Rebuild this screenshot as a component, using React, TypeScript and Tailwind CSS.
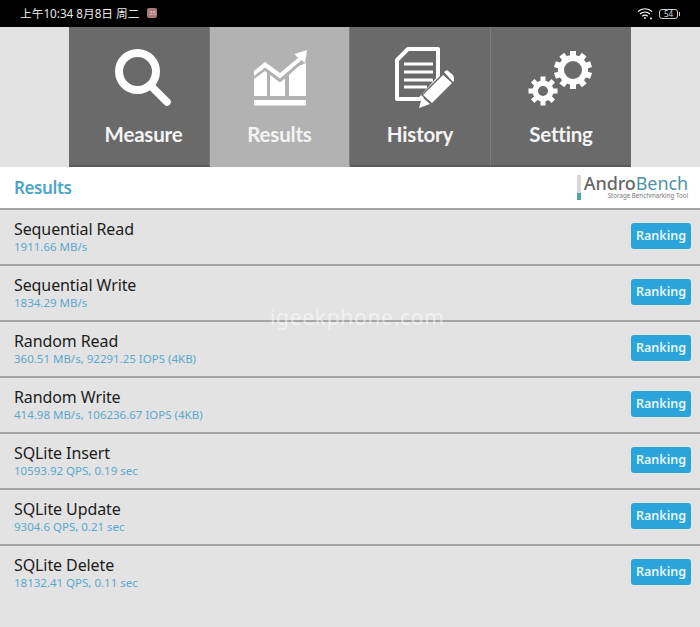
import React from 'react';

const font = { fontFamily: '"Noto Sans", "Noto Sans CJK SC", sans-serif' };

const results = [
    { name: 'Sequential Read', value: '1911.66 MB/s' },
    { name: 'Sequential Write', value: '1834.29 MB/s' },
    { name: 'Random Read', value: '360.51 MB/s, 92291.25 IOPS (4KB)' },
    { name: 'Random Write', value: '414.98 MB/s, 106236.67 IOPS (4KB)' },
    { name: 'SQLite Insert', value: '10593.92 QPS, 0.19 sec' },
    { name: 'SQLite Update', value: '9304.6 QPS, 0.21 sec' },
    { name: 'SQLite Delete', value: '18132.41 QPS, 0.11 sec' },
];

const MeasureIcon = () => (
    <svg width="60" height="62" viewBox="0 0 60 62" fill="none" stroke="white">
        <circle cx="23.5" cy="24.5" r="18.5" strokeWidth="8" />
        <path d="M38 40 L53 55" strokeWidth="7.5" strokeLinecap="round" />
    </svg>
);

const ResultsIcon = () => (
    <svg width="56" height="60" viewBox="0 0 56 60" fill="white">
        <path d="M2 23 L13 14 L28 25 L46 10 L42.5 6 L55 2 L53 15 L49.5 12 L28 30.5 L13 19.5 L2 28 Z" />
        <path d="M2 31 L13 23 L15 24.5 L15 48 L2 48 Z" />
        <path d="M18 27 L28 34.5 L33 30.5 L33 48 L18 48 Z" />
        <path d="M37 27 L47 18 L54 15 L54 48 L37 48 Z" />
        <rect x="2" y="52" width="52" height="5.5" />
    </svg>
);

const HistoryIcon = () => (
    <svg width="60" height="64" viewBox="0 0 60 64" fill="none">
        <path d="M14 3 H44 V33 L26 53 H3 V14 Z" stroke="white" strokeWidth="4" strokeLinejoin="round" />
        <path d="M10 18 H39 M10 26 H39 M10 34 H39 M10 41 H33" stroke="white" strokeWidth="3" />
        <path d="M28 49 L49 28 L59 37 L38 58 Z" fill="white" stroke="#6a6a6a" strokeWidth="1.5" />
        <path d="M50 26 L53 24 L59 29 L61 34 L59 36 Z" fill="white" />
        <path d="M28 51 L36 58 L25 62 Z" fill="white" />
    </svg>
);

const Gear = ({ cx, cy, r, hole, teeth, tw }: { cx: number; cy: number; r: number; hole: number; teeth: number; tw: number }) => (
    <g>
        {Array.from({ length: teeth }).map((_, i) => (
            <rect
                key={i}
                x={cx - tw / 2}
                y={cy - r - 4}
                width={tw}
                height={8}
                fill="white"
                transform={`rotate(${(360 / teeth) * i} ${cx} ${cy})`}
            />
        ))}
        <circle cx={cx} cy={cy} r={r} fill="white" />
        <circle cx={cx} cy={cy} r={hole} fill="#6a6a6a" />
    </g>
);

const SettingIcon = () => (
    <svg width="66" height="58" viewBox="0 0 66 58">
        <Gear cx={45} cy={21} r={15} hole={9} teeth={10} tw={6} />
        <Gear cx={15} cy={42} r={10.5} hole={5} teeth={8} tw={5} />
    </svg>
);

const tabs = [
    { label: 'Measure', icon: <MeasureIcon />, active: false, box: 'w-[141px] pl-[9px]' },
    { label: 'Results', icon: <ResultsIcon />, active: true, box: 'w-[140px]' },
    { label: 'History', icon: <HistoryIcon />, active: false, box: 'w-[141px]' },
    { label: 'Setting', icon: <SettingIcon />, active: false, box: 'w-[140px]' },
];

const WifiIcon = () => (
    <svg width="16" height="13" viewBox="0 0 16 13" fill="none" stroke="white" strokeWidth="1.2">
        <path d="M1 4.5 C5 0.8 11 0.8 15 4.5" />
        <path d="M3 7 C6 4.3 10 4.3 13 7" />
        <path d="M5.2 9.3 C7 7.8 9 7.8 10.8 9.3" />
        <circle cx="8" cy="11" r="0.9" fill="white" stroke="none" />
        <circle cx="14" cy="11.5" r="1" fill="white" stroke="none" />
    </svg>
);

const Battery = () => (
    <div className="flex items-center">
        <div className="w-[19px] h-[10px] border border-[#cccccc] rounded-[3px] flex items-center justify-center text-[8px] leading-none text-[#dddddd]">
            54
        </div>
        <div className="w-[1px] h-[4px] bg-[#cccccc] ml-[1px]" />
    </div>
);

export default function App() {
    return (
        <div className="relative w-[700px] h-[627px] bg-[#e3e3e3] overflow-hidden" style={font}>
            {/* status bar */}
            <div className="h-[27px] bg-black flex items-center justify-between pl-[20px] pr-[20px]">
                <div className="flex items-center gap-[8px] text-[11.7px] text-[#e8e8e8]">
                    <span>上午10:34 8月8日 周二</span>
                    <div className="w-[10px] h-[10px] rounded-[2px] bg-[#a87878] flex items-center justify-center text-[6px] leading-none text-[#e8d0d0]">
                        35
                    </div>
                </div>
                <div className="flex items-center gap-[6px]">
                    <WifiIcon />
                    <Battery />
                </div>
            </div>

            {/* tabs */}
            <div className="flex h-[140px] mx-[69px]">
                {tabs.map(tab => (
                    <div
                        key={tab.label}
                        className={`shrink-0 flex flex-col items-center border-r border-[#7c7c7c] last:border-r-0 border-b-2 ${tab.box} ${tab.active ? 'bg-[#b2b2b2] border-b-[#b2b2b2]' : 'bg-[#6a6a6a] border-b-[#5c5c5c]'}`}
                    >
                        <div className={`h-[84px] pt-[18px] flex items-center justify-center ${tab.label === 'History' ? 'pl-[8px]' : ''}`}>{tab.icon}</div>
                        <div className="text-[20.5px] font-bold leading-[28px] mt-[9px] text-[#f4f4f4] tracking-[-0.2px]" style={{ fontFamily: 'Lato, sans-serif' }}>
                            {tab.label}
                        </div>
                    </div>
                ))}
            </div>

            {/* header */}
            <div className="h-[41px] bg-white flex items-center justify-between pl-[14px] pr-[12px]">
                <div className="text-[17px] font-semibold text-[#4ba6c8] tracking-[-0.4px] mt-[1px]">Results</div>
                <div className="flex items-stretch h-[25px]">
                    <div className="w-[4px] mr-[3px] flex flex-col justify-end bg-[#d8d8d8]">
                        <div className="h-[7px] bg-[#4f9fb5]" />
                    </div>
                    <div className="flex flex-col items-end">
                        <div className="h-[16px] text-[18px] leading-[16px] tracking-[-0.1px]">
                            <span className="inline-block leading-[16px] text-[#666666] font-medium">Andro</span>
                            <span className="inline-block leading-[16px] text-[#4f93a5]">Bench</span>
                        </div>
                        <div className="text-[6.2px] leading-[8px] text-[#777777] mt-[1px]">Storage Benchmarking Tool</div>
                    </div>
                </div>
            </div>

            {/* rows */}
            <div>
                {results.map(r => (
                    <div key={r.name} className="h-[56px] border-t-2 border-[#a6a6a6] flex items-center justify-between pl-[14px] pr-[9px]">
                        <div className="-mt-[2px]">
                            <div className="text-[16px] leading-[22px] text-[#1c1c1c] tracking-[-0.1px]">{r.name}</div>
                            <div className="text-[11.5px] leading-[14px] text-[#5aa9cb]">{r.value}</div>
                        </div>
                        <div className="w-[60px] h-[26px] rounded-[3px] bg-[#2ba4da] flex items-center justify-center text-[12.5px] font-semibold text-[#e8f6fc] -mt-[2px]">
                            Ranking
                        </div>
                    </div>
                ))}
            </div>

            {/* watermark */}
            <div className="absolute left-[270px] top-[304px] text-[21px] leading-[26px] text-white/50 tracking-[0.7px]">igeekphone.com</div>
        </div>
    );
}
